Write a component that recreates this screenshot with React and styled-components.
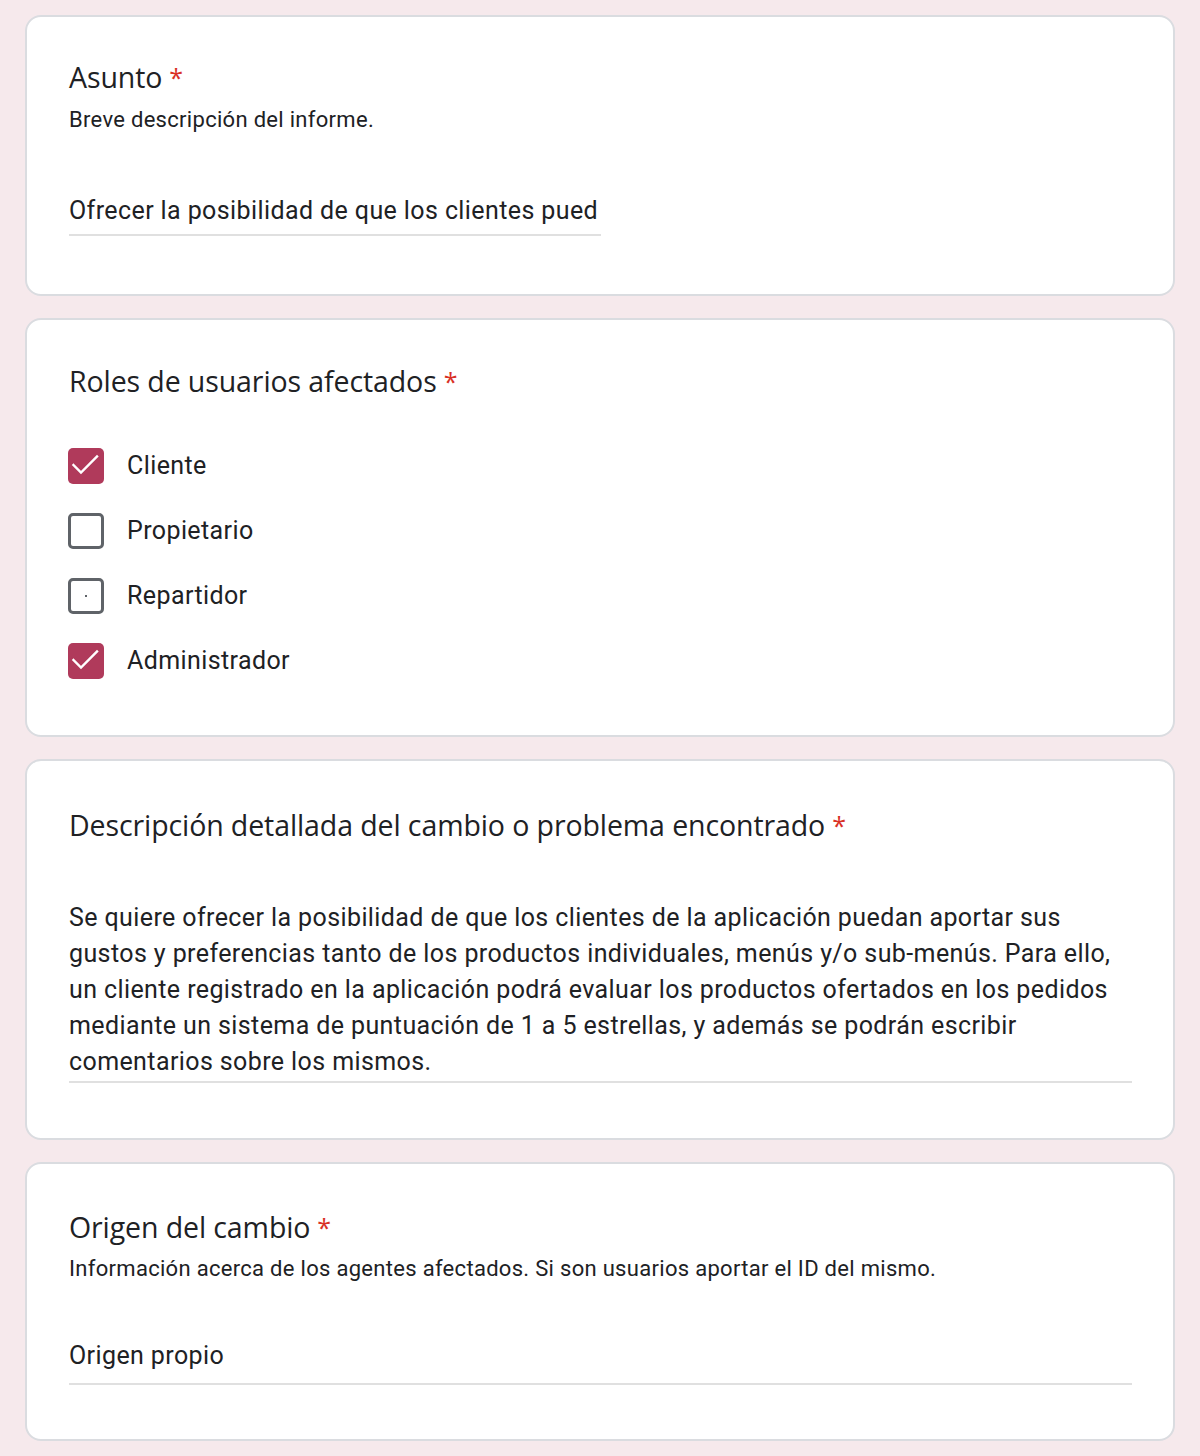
import React from "react";
import styled, { createGlobalStyle } from "styled-components";

const Global = createGlobalStyle`
  html, body { margin: 0; padding: 0; background: #f6e9ec; }
  body { font-family: Roboto, "Liberation Sans", sans-serif; color: #202124; }
`;

const Page = styled.div`
  display: flex;
  flex-direction: column;
  gap: 22px;
  padding: 15px 25px 17px 25px;
`;

const Card = styled.section`
  background: #fff;
  border: 2px solid #dadce0;
  border-radius: 16px;
  padding: ${p => p.$pad || "42px 41px 56px 42px"};
  display: flex;
  flex-direction: column;
`;

const Title = styled.h2`
  margin: 0;
  font-family: "Open Sans", Roboto, sans-serif;
  font-weight: 400;
  font-size: 28.5px;
  line-height: 36px;
  letter-spacing: -0.1px;
  color: #202124;
`;

const Star = styled.span`
  color: #d93025;
  margin-left: 7px;
  font-size: 25px;
  vertical-align: 1px;
`;

const Desc = styled.p`
  margin: ${p => p.$mt || "10px"} 0 0 0;
  font-size: 22px;
  line-height: 30px;
  letter-spacing: 0.3px;
  color: #202124;
`;

const Field = styled.div`
  margin-top: ${p => p.$mt || "56px"};
  width: ${p => p.$w || "100%"};
  border-bottom: 2px solid #e0e0e0;
  font-size: 25px;
  line-height: 36px;
  letter-spacing: 0.4px;
  padding-bottom: ${p => p.$pb || "6px"};
  white-space: ${p => (p.$nowrap ? "nowrap" : "normal")};
  overflow: hidden;
`;

const List = styled.div`
  display: flex;
  flex-direction: column;
  gap: 29px;
  margin-top: 49px;
`;

const Row = styled.label`
  display: flex;
  align-items: center;
  gap: 23px;
  margin-left: -1px;
  font-size: 25px;
  line-height: 36px;
  letter-spacing: 0.4px;
`;

const Box = styled.span`
  width: 36px;
  height: 36px;
  box-sizing: border-box;
  border-radius: 5px;
  border: ${p => (p.$checked ? "none" : "3px solid #5f6368")};
  background: ${p => (p.$checked ? "#b03a5b" : "#fff")};
  display: flex;
  align-items: center;
  justify-content: center;
  flex-shrink: 0;
`;

const Dot = styled.span`
  width: 2px;
  height: 2px;
  background: #5f6368;
`;

const Check = () => (
  <svg width="36" height="36" viewBox="0 0 36 36" fill="none">
    <path d="M5.5 17 L13 24.5 L29 8.5" stroke="#fff" strokeWidth="2.4" strokeLinecap="square" />
  </svg>
);

const roles = [
  { label: "Cliente", checked: true },
  { label: "Propietario", checked: false },
  { label: "Repartidor", checked: false, dot: true },
  { label: "Administrador", checked: true },
];

export default function App() {
  return (
    <>
      <Global />
      <Page>
        <Card $pad="42px 41px 58px 42px">
          <Title>Asunto<Star>*</Star></Title>
          <Desc>Breve descripción del informe.</Desc>
          <Field $mt="58px" $w="532px" $pb="5px" $nowrap>Ofrecer la posibilidad de que los clientes pued</Field>
        </Card>
        <Card $pad="43px 41px 56px 42px">
          <Title>Roles de usuarios afectados<Star>*</Star></Title>
          <List>
            {roles.map(r => (
              <Row key={r.label}>
                <Box $checked={r.checked}>
                  {r.checked ? <Check /> : r.dot ? <Dot /> : null}
                </Box>
                {r.label}
              </Row>
            ))}
          </List>
        </Card>
        <Card $pad="46px 41px 55px 42px">
          <Title>Descripción detallada del cambio o problema encontrado<Star>*</Star></Title>
          <Field $mt="57px" $pb="1px">
            Se quiere ofrecer la posibilidad de que los clientes de la aplicación puedan aportar sus gustos y preferencias tanto de los productos individuales, menús y/o sub-menús. Para ello, un cliente registrado en la aplicación podrá evaluar los productos ofertados en los pedidos mediante un sistema de puntuación de 1 a 5 estrellas, y además se podrán escribir comentarios sobre los mismos.
          </Field>
        </Card>
        <Card $pad="45px 41px 54px 42px">
          <Title>Origen del cambio<Star>*</Star></Title>
          <Desc $mt="9px">Información acerca de los agentes afectados. Si son usuarios aportar el ID del mismo.</Desc>
          <Field $mt="54px" $pb="9px">Origen propio</Field>
        </Card>
      </Page>
    </>
  );
}
